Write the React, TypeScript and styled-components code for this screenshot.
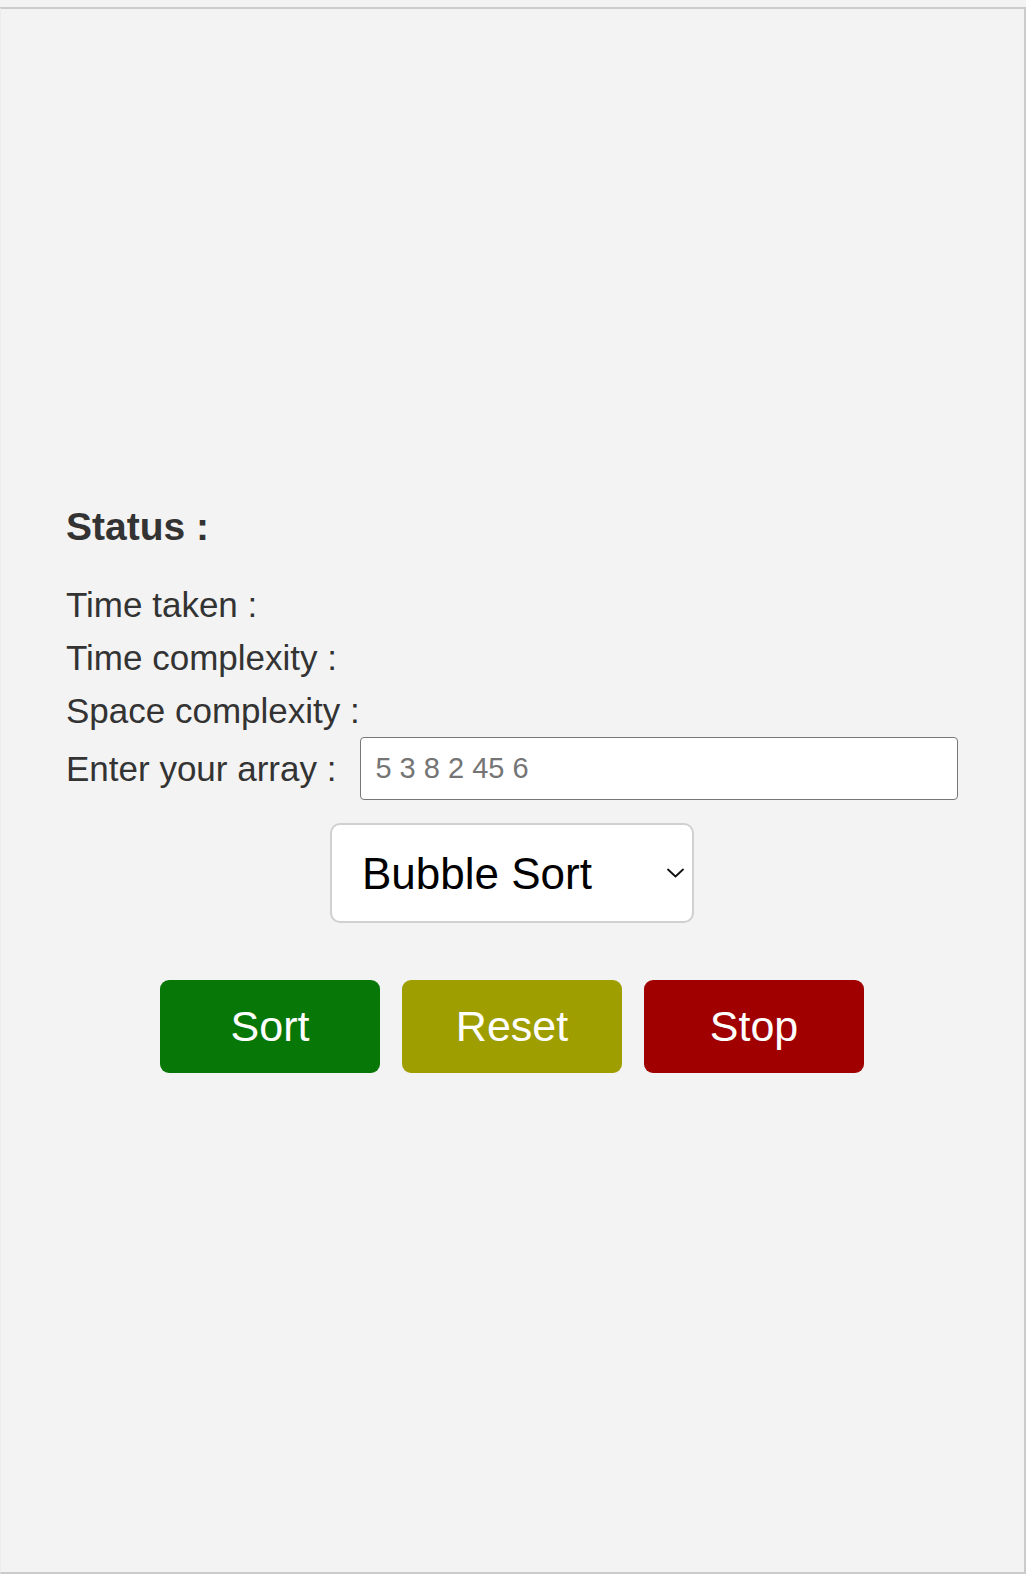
import React from "react";
import styled, { createGlobalStyle } from "styled-components";

const GlobalStyle = createGlobalStyle`
  html, body {
    margin: 0;
    padding: 0;
    background: #f3f3f3;
  }
  body {
    font-family: "Liberation Sans", Arial, Helvetica, sans-serif;
    color: #333;
  }
`;

const Frame = styled.div`
  box-sizing: border-box;
  margin-top: 7px;
  width: 1026px;
  height: 1567px;
  border-top: 2px solid #cbcbcb;
  border-right: 2px solid #cbcbcb;
  border-bottom: 2px solid #cbcbcb;
  border-left: 1px solid #ececec;
  background: #f3f3f3;
  display: flex;
  flex-direction: column;
`;

const BarsArea = styled.div`
  height: 495px;
  flex-shrink: 0;
`;

const Panel = styled.div`
  padding: 0 66px 0 65px;
  display: flex;
  flex-direction: column;
`;

const StatusTitle = styled.h2`
  margin: 0 0 28px 0;
  font-size: 39px;
  line-height: 46px;
  font-weight: 700;
  color: #333;
`;

const InfoLine = styled.div`
  font-size: 35px;
  line-height: 53px;
  color: #333;
`;

const InputRow = styled.div`
  display: flex;
  align-items: center;
  gap: 24px;
`;

const Label = styled.label`
  font-size: 35px;
  line-height: 53px;
  color: #333;
  white-space: nowrap;
`;

const ArrayInput = styled.input`
  flex: 1;
  box-sizing: border-box;
  height: 63px;
  min-width: 0;
  padding: 0 14px;
  border: 1.5px solid #777;
  border-radius: 4px;
  background: #fff;
  font-family: "Liberation Sans", Arial, sans-serif;
  font-size: 29px;
  color: #222;
  outline: none;
  &::placeholder {
    color: #757575;
  }
`;

const SelectWrap = styled.div`
  position: relative;
  align-self: center;
  margin-top: 23px;
  width: 364px;
  height: 100px;
`;

const AlgoSelect = styled.select`
  appearance: none;
  -webkit-appearance: none;
  box-sizing: border-box;
  width: 100%;
  height: 100%;
  padding: 0 40px 0 30px;
  border: 2px solid #d0d0d0;
  border-radius: 10px;
  background: #fff;
  font-family: "Liberation Sans", Arial, sans-serif;
  font-size: 44px;
  color: #000;
  outline: none;
`;

const Chevron = styled.svg`
  position: absolute;
  right: 10px;
  top: 45px;
  width: 17px;
  height: 10px;
  pointer-events: none;
`;

const ButtonRow = styled.div`
  display: flex;
  justify-content: center;
  gap: 22px;
  margin-top: 57px;
`;

const ActionButton = styled.button<{ $bg: string }>`
  width: 220px;
  height: 93px;
  border: none;
  border-radius: 9px;
  background: ${(p) => p.$bg};
  color: #fff;
  font-family: "Liberation Sans", Arial, sans-serif;
  font-size: 43px;
  cursor: pointer;
`;

export default function App() {
  return (
    <>
      <GlobalStyle />
      <Frame>
        <BarsArea />
        <Panel>
          <StatusTitle>Status :</StatusTitle>
          <InfoLine>Time taken :</InfoLine>
          <InfoLine>Time complexity :</InfoLine>
          <InfoLine>Space complexity :</InfoLine>
          <InputRow>
            <Label htmlFor="arr">Enter your array :</Label>
            <ArrayInput id="arr" type="text" placeholder="5 3 8 2 45 6" />
          </InputRow>
          <SelectWrap>
            <AlgoSelect defaultValue="bubble">
              <option value="bubble">Bubble Sort</option>
              <option value="selection">Selection Sort</option>
              <option value="insertion">Insertion Sort</option>
              <option value="merge">Merge Sort</option>
              <option value="quick">Quick Sort</option>
            </AlgoSelect>
            <Chevron viewBox="0 0 17 10" fill="none">
              <path d="M1 1.5 L8.5 8.5 L16 1.5" stroke="#111" strokeWidth="1.8" strokeLinecap="round" strokeLinejoin="round" />
            </Chevron>
          </SelectWrap>
          <ButtonRow>
            <ActionButton $bg="#077707">Sort</ActionButton>
            <ActionButton $bg="#9f9e00">Reset</ActionButton>
            <ActionButton $bg="#a00000">Stop</ActionButton>
          </ButtonRow>
        </Panel>
      </Frame>
    </>
  );
}
